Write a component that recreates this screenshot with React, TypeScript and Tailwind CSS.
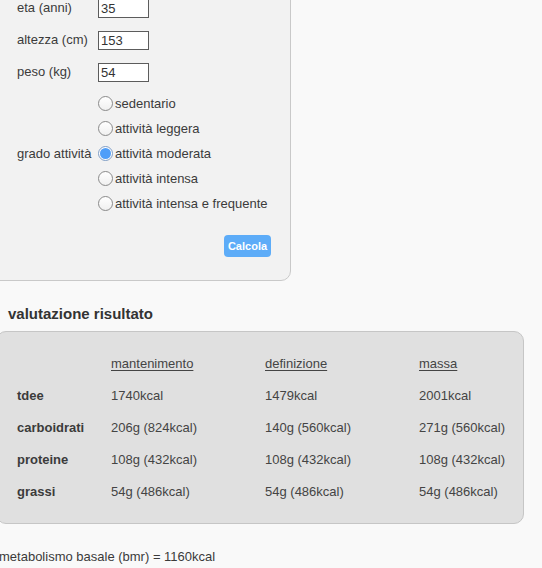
const FONT = "font-['Liberation_Sans',Arial,sans-serif]";

const FIELDS = [
  { label: "eta (anni)", value: "35" },
  { label: "altezza (cm)", value: "153" },
  { label: "peso (kg)", value: "54" },
];

const ACTIVITY = [
  "sedentario",
  "attività leggera",
  "attività moderata",
  "attività intensa",
  "attività intensa e frequente",
];

const COLUMNS = ["mantenimento", "definizione", "massa"];

const ROWS = [
  { label: "tdee", values: ["1740kcal", "1479kcal", "2001kcal"] },
  { label: "carboidrati", values: ["206g (824kcal)", "140g (560kcal)", "271g (560kcal)"] },
  { label: "proteine", values: ["108g (432kcal)", "108g (432kcal)", "108g (432kcal)"] },
  { label: "grassi", values: ["54g (486kcal)", "54g (486kcal)", "54g (486kcal)"] },
];

function Radio({ checked }: { checked: boolean }) {
  return (
    <span
      className={
        "mr-[2px] flex h-[15px] w-[15px] shrink-0 items-center justify-center rounded-full border " +
        (checked
          ? "border-[#7e9cc4] bg-white"
          : "border-[#8a8a8a] bg-gradient-to-b from-white to-[#f0f0f0]")
      }
    >
      {checked && <span className="h-[11px] w-[11px] rounded-full bg-[#4f9ef8]" />}
    </span>
  );
}

export default function App() {
  return (
    <div className={`min-h-[568px] overflow-hidden bg-[#f9f9f9] text-[13px] text-[#3b3b3b] ${FONT}`}>
      {/* form panel (top is scrolled away) */}
      <div className="-mt-[9px] -ml-[10px] w-[301px] rounded-b-[10px] border border-[#c9c9c9] bg-[#f2f2f2] pb-[23px] pl-[26px] pr-[19px]">
        {FIELDS.map((f) => (
          <div key={f.label} className="grid h-[32px] grid-cols-[81px_auto] items-center">
            <span>{f.label}</span>
            <input
              readOnly
              value={f.value}
              className="h-[19px] w-[51px] border border-[#5c5c5c] bg-white px-[2px] text-[13px] leading-none text-[#333] outline-none"
            />
          </div>
        ))}

        <div className="mt-[3px] grid grid-cols-[81px_auto]">
          <span className="self-center">grado attività</span>
          <div className="flex flex-col">
            {ACTIVITY.map((a, i) => (
              <label key={a} className="flex h-[25px] items-center">
                <Radio checked={i === 2} />
                <span>{a}</span>
              </label>
            ))}
          </div>
        </div>

        <div className="mt-[19px] flex justify-end">
          <button className="h-[22px] w-[47px] rounded-[4px] bg-[#5dacf8] text-[11px] font-bold text-white">
            Calcola
          </button>
        </div>
      </div>

      <h2 className="mt-[24px] ml-[8px] text-[15px] font-bold leading-[17px] text-[#333]">
        valutazione risultato
      </h2>

      {/* results */}
      <div className="mt-[9px] -ml-[4px] w-[528px] rounded-[10px] border border-[#c6c6c6] bg-[#e0e0e0] pt-[16px] pb-[15px] pl-[20px] text-[#444]">
        <div className="grid h-[32px] grid-cols-[94px_154px_154px_auto] items-center">
          <span />
          {COLUMNS.map((c) => (
            <span key={c} className="underline underline-offset-2">
              {c}
            </span>
          ))}
        </div>
        {ROWS.map((r) => (
          <div key={r.label} className="grid h-[32px] grid-cols-[94px_154px_154px_auto] items-center">
            <span className="font-bold text-[#3b3b3b]">{r.label}</span>
            {r.values.map((v, i) => (
              <span key={i}>{v}</span>
            ))}
          </div>
        ))}
      </div>

      <p className="mt-[25px] -ml-[1px] leading-[15px]">metabolismo basale (bmr) = 1160kcal</p>
    </div>
  );
}
